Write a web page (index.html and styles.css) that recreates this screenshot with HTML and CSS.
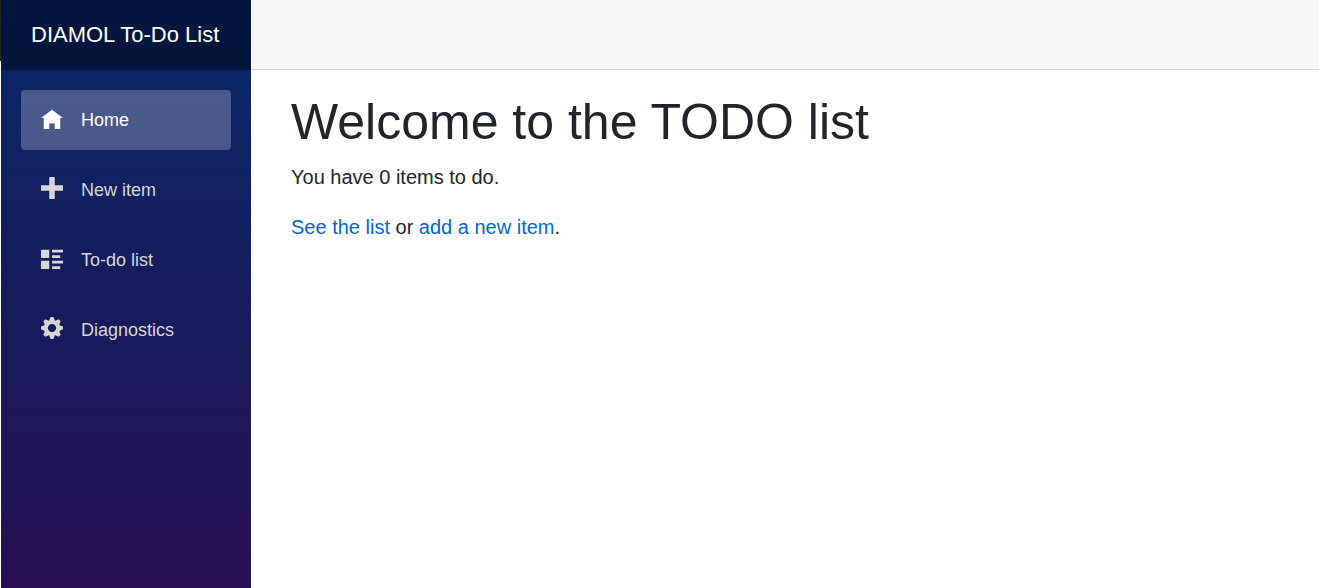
FILE: index.html
```html
<!DOCTYPE html>
<html lang="en">
<head>
    <meta charset="utf-8">
    <meta name="viewport" content="width=device-width, initial-scale=1">
    <title>DIAMOL To-Do List</title>
    <link rel="stylesheet" href="styles.css">
</head>
<body>

<div class="page">
    <div class="sidebar">
        <div class="brand-row">
            <a class="brand" href="#">DIAMOL To-Do List</a>
        </div>
        <nav class="nav">
            <a class="nav-link active" href="#">
                <svg class="icon" viewBox="0 -1 8 8" aria-hidden="true"><path d="M4 0l-4 3h1v4h2v-2h2v2h2v-4h1l-4-3z"/></svg>
                Home
            </a>
            <a class="nav-link" href="#new">
                <svg class="icon" viewBox="0 0 8 8" aria-hidden="true"><path d="M3 0v3h-3v2h3v3h2v-3h3v-2h-3v-3h-2z"/></svg>
                New item
            </a>
            <a class="nav-link" href="#list">
                <svg class="icon" viewBox="0 -1 8 8" aria-hidden="true"><path d="M0 0v3h3v-3h-3zm4 0v1h4v-1h-4zm0 2v1h3v-1h-3zm-4 2v3h3v-3h-3zm4 0v1h4v-1h-4zm0 2v1h3v-1h-3z"/></svg>
                To-do list
            </a>
            <a class="nav-link" href="#diagnostics">
                <svg class="icon" viewBox="0 0 8 8" aria-hidden="true"><path d="M3.5 0l-.5 1.19-.25.13-1.19-.5-.72.72.5 1.19-.13.25-1.19.5v1l1.19.5.13.25-.5 1.19.72.72 1.19-.5.25.13.5 1.19h1l.5-1.19.25-.13 1.19.5.72-.72-.5-1.19.13-.25 1.19-.5v-1l-1.19-.5-.13-.25.5-1.19-.72-.72-1.19.5-.25-.13-.5-1.19h-1zm.5 2.5c.83 0 1.5.67 1.5 1.5s-.67 1.5-1.5 1.5-1.5-.67-1.5-1.5.67-1.5 1.5-1.5z"/></svg>
                Diagnostics
            </a>
        </nav>
    </div>

    <div class="main">
        <div class="top-row"></div>
        <main class="content">
            <h1>Welcome to the TODO list</h1>
            <p>You have 0 items to do.</p>
            <p><a href="#list">See the list</a> or <a href="#new">add a new item</a>.</p>
        </main>
    </div>
</div>

</body>
</html>
```
FILE: styles.css
```css
* {
    box-sizing: border-box;
}

body {
    margin: 0;
    padding-left: 1px;
    background: linear-gradient(#222 61px, #fff 61px);
    color: #212529;
    font-family: "Liberation Sans", Arial, sans-serif;
    font-size: 20px;
    line-height: 30px;
}

a {
    color: #0366d6;
    text-decoration: none;
}

.page {
    display: flex;
    min-height: 100vh;
}

.sidebar {
    flex: 0 0 250px;
    background-image: linear-gradient(180deg, #052767, #281152);
}

.brand-row {
    display: flex;
    align-items: center;
    height: 70px;
    padding: 0 30px;
    background-color: rgba(0, 0, 0, 0.4);
}

.brand {
    color: #fff;
    font-size: 22px;
    white-space: nowrap;
}

.nav {
    display: flex;
    flex-direction: column;
    gap: 10px;
    padding: 20px;
}

.nav-link {
    display: flex;
    align-items: center;
    height: 60px;
    padding: 0 20px;
    border-radius: 4px;
    color: #d7d7d7;
    font-size: 18px;
}

.nav-link:hover {
    background-color: rgba(255, 255, 255, 0.1);
    color: #fff;
}

.nav-link.active {
    background-color: rgba(255, 255, 255, 0.25);
    color: #fff;
}

.icon {
    width: 22px;
    height: 22px;
    margin-right: 18px;
    margin-bottom: 4px;
    fill: currentColor;
}

.main {
    flex: 1;
    background-color: #fff;
}

.top-row {
    height: 70px;
    background-color: #f7f7f7;
    border-bottom: 1px solid #d6d5d5;
}

.content {
    padding: 22px 40px;
}

h1 {
    margin: 0 0 10px;
    font-size: 50px;
    font-weight: 500;
    line-height: 60px;
}

p {
    margin: 0 0 20px;
}
```
